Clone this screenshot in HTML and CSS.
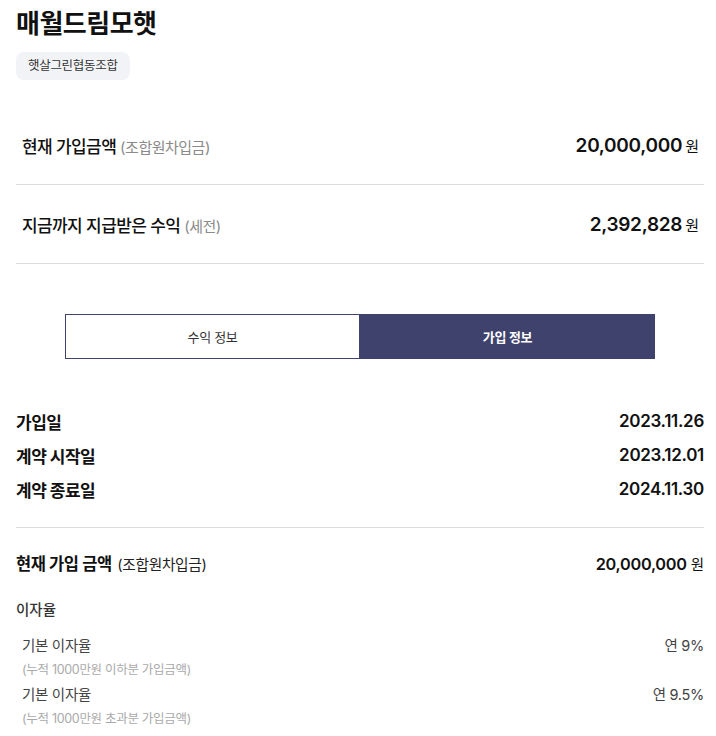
FILE: index.html
```html
<!DOCTYPE html>
<html lang="ko">
<head>
<meta charset="utf-8">
<link rel="stylesheet" href="styles.css">
</head>
<body>
<div class="page">
  <h1 class="title">매월드림모햇</h1>
  <span class="badge">햇살그린협동조합</span>

  <div class="summary">
    <div class="sum-row">
      <div class="sum-label">현재 가입금액 <span class="paren">(조합원차입금)</span></div>
      <div class="sum-value"><span class="num">20,000,000</span><span class="unit">원</span></div>
    </div>
    <div class="sum-row">
      <div class="sum-label">지금까지 지급받은 수익 <span class="paren">(세전)</span></div>
      <div class="sum-value"><span class="num">2,392,828</span><span class="unit">원</span></div>
    </div>
  </div>

  <div class="tabs">
    <div class="tab">수익 정보</div>
    <div class="tab active">가입 정보</div>
  </div>

  <div class="dates">
    <div class="date-row"><span class="d-label">가입일</span><span class="d-value">2023.11.26</span></div>
    <div class="date-row"><span class="d-label">계약 시작일</span><span class="d-value">2023.12.01</span></div>
    <div class="date-row"><span class="d-label">계약 종료일</span><span class="d-value">2024.11.30</span></div>
  </div>

  <div class="amount-row">
    <div class="a-label">현재 가입 금액 <span class="a-paren">(조합원차입금)</span></div>
    <div class="a-value"><span class="a-num">20,000,000</span><span class="a-unit">원</span></div>
  </div>

  <div class="rate-title">이자율</div>
  <div class="rate-row">
    <div class="rate-left">
      <div class="rate-name">기본 이자율</div>
      <div class="rate-sub">(누적 1000만원 이하분 가입금액)</div>
    </div>
    <div class="rate-value">연 9%</div>
  </div>
  <div class="rate-row">
    <div class="rate-left">
      <div class="rate-name">기본 이자율</div>
      <div class="rate-sub">(누적 1000만원 초과분 가입금액)</div>
    </div>
    <div class="rate-value">연 9.5%</div>
  </div>
</div>
</body>
</html>
```

FILE: styles.css
```css
* { box-sizing: border-box; }
html, body { margin: 0; padding: 0; background: #fff; }
body {
  font-family: Inter, "Noto Sans CJK KR", sans-serif;
  color: #111;
}
.page {
  padding: 6px 12px 0 16px;
}
.title {
  margin: 0;
  font-size: 26px;
  font-weight: 700;
  line-height: 36px;
  letter-spacing: -0.5px;
}
.badge {
  display: inline-block;
  margin-top: 10px;
  padding: 0 12px;
  height: 28px;
  line-height: 28px;
  background: #f2f3f6;
  border-radius: 8px;
  font-size: 12.5px;
  color: #333;
  letter-spacing: -0.3px;
}
.summary { margin-top: 26px; }
.sum-row {
  display: flex;
  justify-content: space-between;
  align-items: center;
  height: 79px;
  padding: 0 5px 0 6px;
  border-bottom: 1px solid #dcdcdc;
}
.sum-label {
  font-size: 17px;
  font-weight: 500;
  letter-spacing: -0.6px;
}
.paren { font-size: 15px; font-weight: 400; color: #8a8a8a; letter-spacing: -0.5px; }
.sum-value { display: flex; align-items: baseline; }
.num { font-size: 19px; font-weight: 600; letter-spacing: -0.3px; }
.unit { font-size: 15px; margin-left: 3px; }

.tabs {
  display: flex;
  margin: 50px 49px 0 49px;
  height: 45px;
}
.tab {
  flex: 1;
  display: flex;
  align-items: center;
  justify-content: center;
  font-size: 13px;
  color: #333;
  border: 1.5px solid #40426e;
  letter-spacing: -0.3px;
}
.tab.active {
  background: #40426e;
  color: #fff;
  font-weight: 700;
}

.dates { margin-top: 45px; padding-bottom: 21px; border-bottom: 1px solid #dcdcdc; }
.date-row {
  display: flex;
  justify-content: space-between;
  align-items: center;
  height: 34px;
}
.d-label { font-size: 17px; font-weight: 700; letter-spacing: -0.5px; }
.d-value { font-size: 17px; font-weight: 600; letter-spacing: -0.3px; }

.amount-row {
  display: flex;
  justify-content: space-between;
  align-items: center;
  height: 70px;
}
.a-label { font-size: 16.5px; font-weight: 700; letter-spacing: -0.4px; }
.a-paren { font-size: 14.7px; font-weight: 400; color: #222; margin-left: 2px; letter-spacing: -0.3px; }
.a-value { display: flex; align-items: baseline; }
.a-num { font-size: 16.3px; font-weight: 600; letter-spacing: -0.3px; }
.a-unit { font-size: 14.5px; margin-left: 4px; }

.rate-title {
  font-size: 14.5px;
  font-weight: 500;
  color: #333;
  height: 36px;
  line-height: 24px;
}
.rate-row {
  display: flex;
  justify-content: space-between;
  align-items: flex-start;
  padding-left: 6px;
  margin-bottom: 1px;
}
.rate-name { font-size: 14.5px; color: #444; line-height: 24px; letter-spacing: -0.3px; }
.rate-sub { font-size: 12.5px; color: #aaa; line-height: 24px; letter-spacing: -0.3px; }
.rate-value { font-size: 14.5px; color: #444; line-height: 24px; letter-spacing: -0.3px; }
```
